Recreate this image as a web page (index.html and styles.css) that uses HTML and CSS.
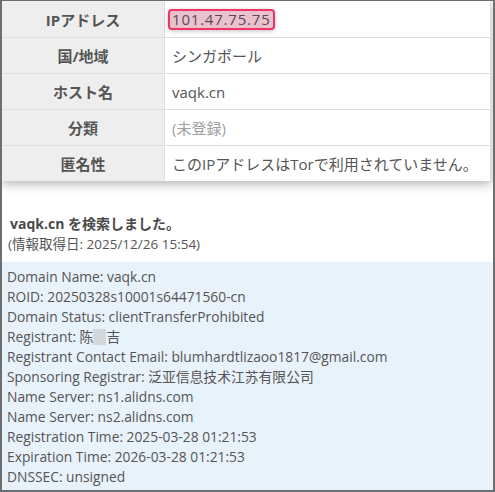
FILE: index.html
```html
<!DOCTYPE html>
<html lang="ja">
<head>
    <meta charset="UTF-8">
    <title>vaqk.cn - IP情報</title>
    <link rel="stylesheet" href="styles.css">
</head>
<body>

<div class="frame">
    <table class="ipinfo">
        <tr>
            <th>IPアドレス</th>
            <td><span class="ip-mark">101.47.75.75</span></td>
        </tr>
        <tr>
            <th>国/地域</th>
            <td>シンガポール</td>
        </tr>
        <tr>
            <th>ホスト名</th>
            <td>vaqk.cn</td>
        </tr>
        <tr>
            <th>分類</th>
            <td class="muted">(未登録)</td>
        </tr>
        <tr>
            <th>匿名性</th>
            <td>このIPアドレスはTorで利用されていません。</td>
        </tr>
    </table>

    <div class="search-head">
        <h3>vaqk.cn を検索しました。</h3>
        <p>(情報取得日: 2025/12/26 15:54)</p>
    </div>

    <div class="whois">
        <div>Domain Name: vaqk.cn</div>
        <div>ROID: 20250328s10001s64471560-cn</div>
        <div>Domain Status: clientTransferProhibited</div>
        <div>Registrant: 陈<span class="masked"></span>吉</div>
        <div>Registrant Contact Email: blumhardtlizaoo1817@gmail.com</div>
        <div>Sponsoring Registrar: 泛亚信息技术江苏有限公司</div>
        <div>Name Server: ns1.alidns.com</div>
        <div>Name Server: ns2.alidns.com</div>
        <div>Registration Time: 2025-03-28 01:21:53</div>
        <div>Expiration Time: 2026-03-28 01:21:53</div>
        <div>DNSSEC: unsigned</div>
    </div>
</div>

</body>
</html>
```

FILE: styles.css
```css
body {
    margin: 0;
    font-family: "Open Sans", "Noto Sans CJK JP", sans-serif;
    color: #555;
    background: #fff;
}

.frame {
    box-sizing: border-box;
    height: 492px;
    border-top: 1px solid #6e6e6e;
    border-left: 2px solid #6e6e6e;
    border-right: 2px solid #6e6e6e;
    border-bottom: 2px solid #6e6e6e;
    overflow: hidden;
}

.ipinfo {
    width: 489px;
    border-collapse: collapse;
    box-shadow: 0 3px 10px rgba(0, 0, 0, 0.3);
    font-size: 15px;
}

.ipinfo th,
.ipinfo td {
    height: 35px;
    padding: 0 7px;
    border-top: 1px solid #ddd;
    border-right: 1px solid #ddd;
}

.ipinfo tr:first-child th,
.ipinfo tr:first-child td {
    border-top: none;
    height: 36px;
}

.ipinfo th {
    width: 148px;
    background: #eee;
    font-weight: bold;
    text-align: center;
}

.ipinfo td {
    background: #fff;
    text-align: left;
}

.ipinfo .muted {
    color: #a0a0a0;
}

.ip-mark {
    display: inline-block;
    padding: 0 2px;
    line-height: 17px;
    letter-spacing: 0.8px;
    background: #e9c2cd;
    border: 2px solid #f03468;
    border-radius: 4px;
    box-shadow: 0 1px 4px rgba(0, 0, 0, 0.25);
    color: #5a4a58;
    margin-left: -4px;
}

.search-head {
    padding: 33px 6px 8px;
}

.search-head h3 {
    margin: 0 0 0 2px;
    font-size: 14px;
    line-height: 20px;
    color: #4a4a4a;
}

.search-head p {
    margin: 0;
    font-size: 13.5px;
    line-height: 20px;
}

.whois {
    background: #e8f2fb;
    padding: 5px 5px;
    font-size: 13.8px;
    line-height: 20px;
    height: 100%;
}

.masked {
    display: inline-block;
    width: 13px;
    height: 16px;
    vertical-align: -3px;
    background: #d3d8dd;
}
```
